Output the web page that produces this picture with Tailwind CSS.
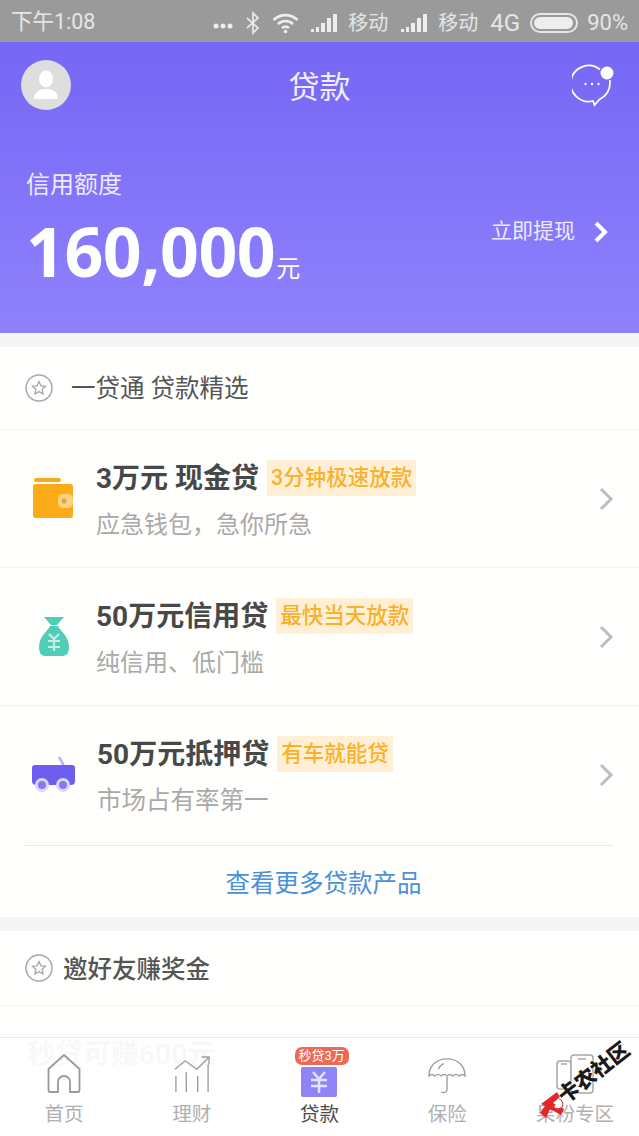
<!DOCTYPE html>
<html lang="zh-CN">
<head>
  <meta charset="UTF-8">
  <title>贷款</title>
  <meta name="viewport" content="width=device-width, initial-scale=1.0">
  <script src="https://cdn.jsdelivr.net/npm/@tailwindcss/browser@4"></script>
</head>
<body class="bg-[#f5f5f7] font-['Roboto','Noto_Sans_CJK_SC',sans-serif]">
<div class="relative w-[639px] h-[1136px] overflow-hidden">

  <!-- STATUS BAR -->
  <div class="h-[42px] bg-[#9a9a9a] text-[#e6e6e6] text-[20px] flex items-center pt-[3px] pl-[11px]">
    <span class="text-[21.500px] whitespace-nowrap">下午1:08</span>
    <div class="absolute right-[11px] top-0 h-[42px] pt-[3px] flex items-center">
      <svg width="20" height="8" viewBox="0 0 20 8" fill="#eee" class="mt-[6px]"><circle cx="3" cy="4" r="2.500"/><circle cx="10" cy="4" r="2.500"/><circle cx="17" cy="4" r="2.500"/></svg>
      <svg class="ml-[13px]" width="14" height="24" viewBox="0 0 14 24" fill="none" stroke="#e6e6e6" stroke-width="1.800"><path d="M1 7l11 10-5 5V2l5 5L1 17"/></svg>
      <svg class="ml-[12px]" width="27" height="22" viewBox="0 0 27 22" fill="none" stroke="#eee" stroke-width="2.600"><path d="M1.500 8c7-6.500 17-6.500 24 0M6 12c4.500-4 10.500-4 15 0M10 16c2.500-2 4.500-2 7 0"/><circle cx="13.500" cy="19.500" r="1.800" fill="#eee" stroke="none"/></svg>
      <svg class="ml-[12px]" width="26" height="20" viewBox="0 0 26 20" fill="#eee"><rect x="0" y="16" width="3" height="3"/><rect x="5" y="14" width="3" height="5"/><rect x="10" y="10" width="4" height="9"/><rect x="16" y="5" width="4" height="14"/><rect x="22" y="1" width="4" height="18"/></svg>
      <span class="ml-[11px]">移动</span>
      <svg class="ml-[13px]" width="26" height="20" viewBox="0 0 26 20" fill="#eee"><rect x="0" y="16" width="3" height="3"/><rect x="5" y="14" width="3" height="5"/><rect x="10" y="10" width="4" height="9"/><rect x="16" y="5" width="4" height="14"/><rect x="22" y="1" width="4" height="18"/></svg>
      <span class="ml-[11px]">移动</span>
      <span class="ml-[12px] text-[24px]">4G</span>
      <div class="ml-[10px] w-[48px] h-[20px] rounded-full border-2 border-[#e6e6e6] p-[2px]">
        <div class="w-[39px] h-full rounded-full bg-[#eee]"></div>
      </div>
      <span class="ml-[9px] text-[22px]">90%</span>
    </div>
  </div>

  <!-- HEADER -->
  <div class="h-[291px] bg-gradient-to-b from-[#7566f5] to-[#9082fc] text-white">
    <div class="flex items-center justify-between pl-[21px] pr-[25px] pt-[18px]">
      <div class="w-[50px] h-[50px] rounded-full bg-[#dedede] flex items-center justify-center">
        <svg width="28" height="32" viewBox="0 0 28 32" fill="#fff"><ellipse cx="14" cy="10" rx="7" ry="8.500"/><path d="M2 30c0-7 5-10 12-10s12 3 12 10z"/></svg>
      </div>
      <span class="text-[31px] h-[50px] leading-[56px] mr-[4px] text-[#f1efff]">贷款</span>
      <svg width="42" height="44" viewBox="0 0 42 44" fill="none" stroke="#fff" stroke-width="1.800">
        <path d="M28 6.500A18 18 0 1 0 21 38l1.500 4 5-5.500C34 33 38 27 38 20c0-1-.1-2-.3-3"/>
        <circle cx="13.500" cy="21" r="1.200" fill="#fff" stroke="none"/><circle cx="20" cy="21" r="1.200" fill="#fff" stroke="none"/><circle cx="26.500" cy="21" r="1.200" fill="#fff" stroke="none"/>
        <circle cx="35" cy="10" r="6.500" fill="#fff" stroke="none"/>
      </svg>
    </div>
    <div class="pl-[26px] pr-[31px] pt-[57px] flex justify-between">
      <div>
        <div class="text-[24px] leading-[36px] text-[#eeebff]">信用额度</div>
        <div class="flex items-baseline mt-[8px]">
          <span class="text-[68px] font-bold leading-[80px] tracking-[-0.5px] font-['Noto_Sans','Noto_Sans_CJK_SC',sans-serif]">160,000</span>
          <span class="text-[24px] ml-[1px]">元</span>
        </div>
      </div>
      <div class="flex items-center h-[40px] mt-[45px]">
        <span class="text-[21px] text-[#eeebff]">立即提现</span>
        <svg class="ml-[18px]" width="15" height="24" viewBox="0 0 15 24" fill="none" stroke="#fff" stroke-width="4"><path d="M3 3l9 9-9 9"/></svg>
      </div>
    </div>
  </div>

  <!-- LOAN CARD -->
  <div class="mt-[14px] bg-[#fffffd]">
    <div class="h-[83px] flex items-center pl-[25px] border-b border-[#f1f1ef]">
      <svg width="28" height="28" viewBox="0 0 28 28" fill="none" stroke="#a8a8a8"><circle cx="14" cy="14" r="13" stroke-width="1.500"/><path d="M14 7.500l2 4.300 4.500.5-3.400 3.100 1 4.600-4.100-2.400-4.100 2.400 1-4.600-3.400-3.100 4.500-.5z" stroke-width="1.300"/></svg>
      <span class="ml-[18px] text-[24.500px] text-[#555] pt-[3px]">一贷通 贷款精选</span>
    </div>

    <div class="h-[138px] flex items-center pl-[33px] pr-[25px] border-b border-[#f1f1ef]">
      <svg width="41" height="41" viewBox="0 0 41 41"><rect x="1" y="0" width="27" height="4" rx="2" fill="#f8a91f"/><rect x="0" y="6" width="40" height="34" rx="3" fill="#fbab17"/><rect x="25" y="16" width="15" height="14" rx="5" fill="#fcd27e"/><circle cx="31" cy="23" r="2.500" fill="#e2a040"/></svg>
      <div class="ml-[22px] pt-[4px]">
        <div class="flex items-center">
          <span class="text-[28px] leading-[37px] font-bold text-[#484848]">3万元 现金贷</span>
          <span class="ml-[8px] bg-[#fff0d5] text-[#fbb02a] text-[21.500px] font-medium leading-[36px] px-[4px]">3分钟极速放款</span>
        </div>
        <div class="mt-[11px] text-[24px] leading-[34px] text-[#a9a9a9]">应急钱包，急你所急</div>
      </div>
      <svg class="ml-auto" width="15" height="24" viewBox="0 0 15 24" fill="none" stroke="#bdbdbd" stroke-width="3"><path d="M2 2l10 10L2 22"/></svg>
    </div>

    <div class="h-[138px] flex items-center pl-[39px] pr-[25px] border-b border-[#f1f1ef]">
      <svg width="30" height="41" viewBox="0 0 30 41"><path d="M5 1h20l-7 8h-6z" fill="#4fcdb8"/><path d="M11 10h8c2 5 11 10 11 21 0 7-3 9-7 9H7c-4 0-7-2-7-9 0-11 9-16 11-21z" fill="#4fcdb8"/><path d="M10 18l5 5 5-5M9 25h12M9 31h12M15 23v12" fill="none" stroke="#c4f0e7" stroke-width="2.200"/></svg>
      <div class="ml-[27px] pt-[4px]">
        <div class="flex items-center">
          <span class="text-[28px] leading-[37px] font-bold text-[#484848]">50万元信用贷</span>
          <span class="ml-[8px] bg-[#fff0d5] text-[#fbb02a] text-[21.500px] font-medium leading-[36px] px-[4px]">最快当天放款</span>
        </div>
        <div class="mt-[11px] text-[24px] leading-[34px] text-[#a9a9a9]">纯信用、低门槛</div>
      </div>
      <svg class="ml-auto" width="15" height="24" viewBox="0 0 15 24" fill="none" stroke="#bdbdbd" stroke-width="3"><path d="M2 2l10 10L2 22"/></svg>
    </div>

    <div class="h-[140px] mx-[25px] flex items-center pl-[7px] pb-[2px] border-b border-[#e9e9e7]">
      <svg width="43" height="38" viewBox="0 0 43 38"><path d="M27 1l5 9" stroke="#b5aefa" stroke-width="2.500" fill="none"/><path d="M3 9h37a3 3 0 0 1 3 3v13c0 3-2 4-4 4H5c-3 0-5-1-5-4V12a3 3 0 0 1 3-3z" fill="#6c5ff0"/><circle cx="10" cy="29" r="7" fill="#dcd8fd"/><circle cx="10" cy="29" r="4" fill="#8679f5"/><circle cx="31" cy="29" r="7" fill="#dcd8fd"/><circle cx="31" cy="29" r="4" fill="#8679f5"/></svg>
      <div class="ml-[22px] pt-[4px]">
        <div class="flex items-center">
          <span class="text-[28px] leading-[37px] font-bold text-[#484848]">50万元抵押贷</span>
          <span class="ml-[8px] bg-[#fff0d5] text-[#fbb02a] text-[21.500px] font-medium leading-[36px] px-[4px]">有车就能贷</span>
        </div>
        <div class="mt-[11px] text-[24.500px] leading-[34px] text-[#a9a9a9]">市场占有率第一</div>
      </div>
      <svg class="ml-auto" width="15" height="24" viewBox="0 0 15 24" fill="none" stroke="#bdbdbd" stroke-width="3"><path d="M2 2l10 10L2 22"/></svg>
    </div>

    <div class="h-[71px] flex items-center justify-center text-[24.500px] text-[#4a90d9] pl-[8px] pt-[6px]">查看更多贷款产品</div>
  </div>

  <!-- INVITE CARD -->
  <div class="mt-[14px] bg-[#fffffd] h-[220px]">
    <div class="h-[75px] flex items-center pl-[25px] border-b border-[#f1f1ef]">
      <svg width="28" height="28" viewBox="0 0 28 28" fill="none" stroke="#a8a8a8"><circle cx="14" cy="14" r="13" stroke-width="1.500"/><path d="M14 7.500l2 4.300 4.500.5-3.400 3.100 1 4.600-4.100-2.400-4.100 2.400 1-4.600-3.400-3.100 4.500-.5z" stroke-width="1.300"/></svg>
      <span class="ml-[10px] text-[24.500px] font-medium text-[#555] pt-[4px]">邀好友赚奖金</span>
    </div>
    <div class="pl-[27px] pt-[31px] text-[28px] font-bold leading-[36px] text-[#333]">秒贷可赚600元</div>
  </div>

  <!-- TAB BAR -->
  <div class="absolute left-0 right-0 bottom-0 h-[99px] bg-white/97 border-t border-[#e8e8e8] grid grid-cols-5 text-[19.500px] text-[#b0b0b0]">
    <div class="flex flex-col items-center">
      <svg class="mt-[16px]" width="34" height="40" viewBox="0 0 34 40" fill="none" stroke="#9a9a9a" stroke-width="1.800"><path d="M17 1L1.500 15v21a2 2 0 0 0 2 2H11V28a6 6 0 0 1 12 0v10h7.500a2 2 0 0 0 2-2V15z" stroke-linejoin="round"/></svg>
      <span class="mt-[7px] leading-[28px]">首页</span>
    </div>
    <div class="flex flex-col items-center">
      <svg class="mt-[18px]" width="36" height="38" viewBox="0 0 38 40" fill="none" stroke="#a0a0a0" stroke-width="1.500"><path d="M1 14l11-9 12 9L36 2M29 1h8v8"/><path d="M2 38V21M13 38V17M25 38V21M36 38V9"/></svg>
      <span class="mt-[7px] leading-[28px]">理财</span>
    </div>
    <div class="relative flex flex-col items-center text-[#4a4a4a]">
      <div class="absolute top-[9px] left-[39px] h-[18px] w-[54px] rounded-[7px] bg-[#ec6a55] text-white text-[13px] leading-[18px] text-center">秒贷3万</div>
      <div class="mt-[29px] w-[36px] h-[30px] rounded-[2px] bg-[#8f84f7] flex items-center justify-center">
        <svg width="18" height="22" viewBox="0 0 18 22" fill="none" stroke="#e6e3ff" stroke-width="2.500"><path d="M3 1l6 7 6-7M1 9h16M1 15h16M9 8v14"/></svg>
      </div>
      <span class="mt-[4px] leading-[28px]">贷款</span>
    </div>
    <div class="flex flex-col items-center">
      <svg class="mt-[18px]" width="40" height="38" viewBox="0 0 40 40" fill="none" stroke="#a0a0a0" stroke-width="1.500"><path d="M1 21C1 10 9 3 20 3s19 7 19 18c-2-2-4-2-6 0-2-2-5-2-7 0-2-2-4-2-6 0-2-2-4-2-6 0-2-2-5-2-7 0-2-2-4-2-6 0z"/><path d="M20 22v13c0 3-2 4-6 3"/><path d="M11 14c1-3 3-5 6-6"/></svg>
      <span class="mt-[7px] leading-[28px]">保险</span>
    </div>
    <div class="flex flex-col items-center">
      <svg class="mt-[16px]" width="38" height="40" viewBox="0 0 38 40" fill="none" stroke="#a8a8a8" stroke-width="1.500"><rect x="1" y="7" width="14" height="28" rx="3"/><rect x="15" y="1" width="22" height="38" rx="3" fill="#fff"/><path d="M22 5h8M5 10h6"/></svg>
      <span class="mt-[7px] leading-[28px]">果粉专区</span>
    </div>
  </div>

  <!-- WATERMARK -->
  <svg class="absolute left-[539px] top-[1091px]" width="26" height="28" viewBox="0 0 26 28">
    <path d="M2 13L18 1l3 5-7 6 11 6-3 6-11-6-4 9-6-5 5-7z" fill="#e3262a"/>
    <path d="M20 8a5 5 0 1 1-5 8" fill="#fff" stroke="#e3262a" stroke-width="1"/>
  </svg>
  <span class="absolute left-[552px] top-[1060px] whitespace-nowrap text-[21px] font-black leading-[26px] text-[#1a1a1a] -rotate-[38deg] [text-shadow:0_0_2px_#fff]">卡农社区</span>
</div>
</body>
</html>
